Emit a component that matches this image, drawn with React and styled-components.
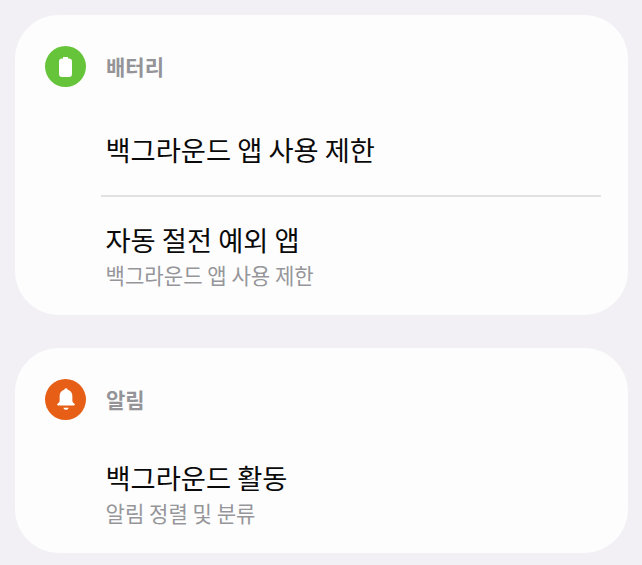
import React from "react";
import styled, { createGlobalStyle } from "styled-components";

const Global = createGlobalStyle`
  html, body { margin: 0; padding: 0; background: #f2f0f4; }
  body { font-family: "Noto Sans CJK KR", "Noto Sans", sans-serif; }
`;
const Page = styled.div`
  width: 642px;
  height: 565px;
  overflow: hidden;
  box-sizing: border-box;
  padding: 15px 15px 0;
  display: flex;
  flex-direction: column;
  gap: 33px;
`;
const Card = styled.section`
  background: #fdfdfd;
  border-radius: 44px;
  width: 613px;
  height: ${p => p.$h}px;
  box-sizing: border-box;
  padding: 31px 0 0 30px;
  display: flex;
  flex-direction: column;
`;
const Header = styled.header`
  display: flex;
  align-items: center;
  gap: 20px;
  height: 41px;
`;
const Badge = styled.div`
  width: 41px;
  height: 41px;
  border-radius: 50%;
  background: ${p => p.$color};
  display: flex;
  align-items: center;
  justify-content: center;
`;
const HeaderLabel = styled.h2`
  margin: 0;
  font-size: 21px;
  font-weight: 700;
  color: #949498;
  line-height: 41px;
`;
const Item = styled.div`
  margin-left: 60.5px;
  margin-top: ${p => p.$mt}px;
`;
const Title = styled.div`
  font-size: 27.3px;
  font-weight: 400;
  color: #0a0a0a;
  line-height: 36px;
`;
const Sub = styled.div`
  font-size: 21.1px;
  color: #96969a;
  line-height: 28px;
  margin-top: 4px;
`;
const Divider = styled.hr`
  margin: 28px 27px 0 56px;
  border: 0;
  height: 2px;
  background: #e2e2e3;
`;
const BatteryIcon = () => (
  <svg width="13" height="20" viewBox="0 0 13 20"><path d="M4 0h5v1.500h1A3 3 0 0 1 13 4.500V17a3 3 0 0 1-3 3H3a3 3 0 0 1-3-3V4.500A3 3 0 0 1 3 1.500h1z" fill="#fff" /></svg>
);
const BellIcon = () => (
  <svg width="20" height="23" viewBox="0 0 22 25"><path d="M11 0a2 2 0 0 1 2 1.800C16.500 2.700 18 5.500 18 9v4.500c0 1.500.8 2.500 2.300 3.700.8.700.4 1.800-.7 1.800H2.400c-1.100 0-1.500-1.100-.7-1.800C3.200 16 4 15 4 13.500V9c0-3.500 1.500-6.300 5-7.200A2 2 0 0 1 11 0z" fill="#fff"/><path d="M8 21.500h6c-.5 1.400-1.600 2.300-3 2.300s-2.500-.9-3-2.300z" fill="#fff"/></svg>
);

export default function App() {
  return (
    <Page>
      <Global />
      <Card $h={300}>
        <Header>
          <Badge $color="#66c43a"><BatteryIcon /></Badge>
          <HeaderLabel>배터리</HeaderLabel>
        </Header>
        <Item $mt={44}><Title>백그라운드 앱 사용 제한</Title></Item>
        <Divider />
        <Item $mt={24}>
          <Title>자동 절전 예외 앱</Title>
          <Sub>백그라운드 앱 사용 제한</Sub>
        </Item>
      </Card>
      <Card $h={205}>
        <Header>
          <Badge $color="#e75f17"><BellIcon /></Badge>
          <HeaderLabel>알림</HeaderLabel>
        </Header>
        <Item $mt={39}>
          <Title>백그라운드 활동</Title>
          <Sub>알림 정렬 및 분류</Sub>
        </Item>
      </Card>
    </Page>
  );
}
